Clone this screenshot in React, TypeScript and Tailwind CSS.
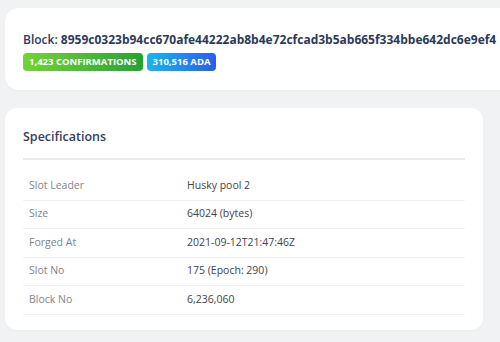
import React from "react";

const rows: [string, string][] = [
  ["Slot Leader", "Husky pool 2"],
  ["Size", "64024 (bytes)"],
  ["Forged At", "2021-09-12T21:47:46Z"],
  ["Slot No", "175 (Epoch: 290)"],
  ["Block No", "6,236,060"],
];

export default function App() {
  return (
    <div
      className="w-[500px] h-[342px] overflow-hidden bg-[#f1f2f4]"
      style={{ fontFamily: '"Open Sans", sans-serif' }}
    >
      <div className="pt-[8px] pl-[5px]">
        <div className="w-[520px] h-[82px] bg-white rounded-l-[14px] pl-[18px] pt-[22px] shadow-[0_1px_3px_rgba(0,0,0,0.03)]">
          <div className="text-[12px] leading-[20px] text-[#2c3a59] whitespace-nowrap">
            <span className="font-semibold">Block: </span>
            <span className="font-bold">8959c0323b94cc670afe44222ab8b4e72cfcad3b5ab665f334bbe642dc6e9ef4</span>
          </div>
          <div className="flex gap-[4px] mt-[3px]">
            <span className="h-[18px] px-[6px] flex items-center rounded-[4px] text-[9.5px] font-bold text-white bg-gradient-to-r from-[#72d434] to-[#1fa335]">
              1,423 CONFIRMATIONS
            </span>
            <span className="h-[18px] px-[6px] flex items-center rounded-[4px] text-[9.5px] font-bold text-white bg-gradient-to-r from-[#1cb4f2] to-[#2a5ee8]">
              310,516 ADA
            </span>
          </div>
        </div>
      </div>
      <div className="pl-[5px] pt-[18px]">
        <div className="w-[478px] h-[222px] bg-white rounded-[12px] px-[18px] pt-[19px] shadow-[0_1px_3px_rgba(0,0,0,0.03)]">
          <div className="text-[12.5px] font-semibold text-[#34405a] leading-[20px] pb-[11px] border-b-2 border-[#ebecee]">
            Specifications
          </div>
          <div className="pt-[12px]">
            {rows.map(([k, v]) => (
              <div
                key={k}
                className="flex items-center h-[28.5px] border-b border-[#f1f1f3] text-[10.5px]"
              >
                <div className="w-[164px] pl-[6px] text-[#80848c]">{k}</div>
                <div className="text-[#3f434b]">{v}</div>
              </div>
            ))}
          </div>
        </div>
      </div>
    </div>
  );
}
